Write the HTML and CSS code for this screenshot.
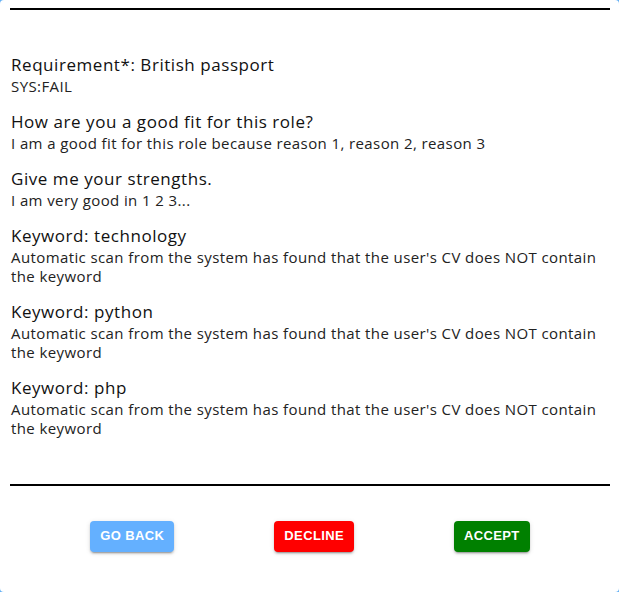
FILE: index.html
```html
<!DOCTYPE html>
<html lang="en">
<head>
<meta charset="utf-8">
<title>Application review</title>
<link rel="stylesheet" href="styles.css">
</head>
<body>
<div class="card">
  <hr class="rule">
  <div class="list">
    <div class="item">
      <div class="label">Requirement*: British passport</div>
      <div class="value">SYS:FAIL</div>
    </div>
    <div class="item">
      <div class="label">How are you a good fit for this role?</div>
      <div class="value">I am a good fit for this role because reason 1, reason 2, reason 3</div>
    </div>
    <div class="item">
      <div class="label">Give me your strengths.</div>
      <div class="value">I am very good in 1 2 3...</div>
    </div>
    <div class="item">
      <div class="label">Keyword: technology</div>
      <div class="value">Automatic scan from the system has found that the user's CV does NOT contain the keyword</div>
    </div>
    <div class="item">
      <div class="label">Keyword: python</div>
      <div class="value">Automatic scan from the system has found that the user's CV does NOT contain the keyword</div>
    </div>
    <div class="item">
      <div class="label">Keyword: php</div>
      <div class="value">Automatic scan from the system has found that the user's CV does NOT contain the keyword</div>
    </div>
  </div>
  <hr class="rule">
  <div class="actions">
    <button class="btn btn-back">Go back</button>
    <button class="btn btn-decline">Decline</button>
    <button class="btn btn-accept">Accept</button>
  </div>
</div>
</body>
</html>
```

FILE: styles.css
```css
html {
  background: #64b0f4;
}
body {
  margin: 0;
  font-family: "Open Sans", "Liberation Sans", sans-serif;
}
.card {
  background: #fff;
  min-height: 592px;
  box-sizing: border-box;
  border-radius: 4px;
  padding: 8px 9px 0 10px;
}
.rule {
  margin: 0;
  border: 0;
  height: 2px;
  background: #000;
}
.list {
  display: flex;
  flex-direction: column;
  gap: 13px;
  margin: 42px 0 46px;
  padding-left: 1px;
}
.label {
  font-size: 17px;
  line-height: 25px;
  font-weight: 500;
  color: #111;
  letter-spacing: 0.55px;
}
.value {
  font-size: 15px;
  line-height: 19px;
  color: #222;
  letter-spacing: 0.4px;
}
.actions {
  display: flex;
  justify-content: center;
  gap: 100px;
  padding: 35px 0;
}
.btn {
  font-family: "Liberation Sans", Arial, sans-serif;
  font-weight: 700;
  font-size: 13px;
  line-height: 22.75px;
  letter-spacing: 0.37px;
  text-transform: uppercase;
  color: #fff;
  border: 0;
  border-radius: 4px;
  padding: 4px 10px;
  box-shadow: 0 3px 1px -2px rgba(0,0,0,0.2), 0 2px 2px 0 rgba(0,0,0,0.14), 0 1px 5px 0 rgba(0,0,0,0.12);
}
.btn-back { background: #64b0ff; }
.btn-decline { background: #ff0000; }
.btn-accept { background: #008000; }
```
